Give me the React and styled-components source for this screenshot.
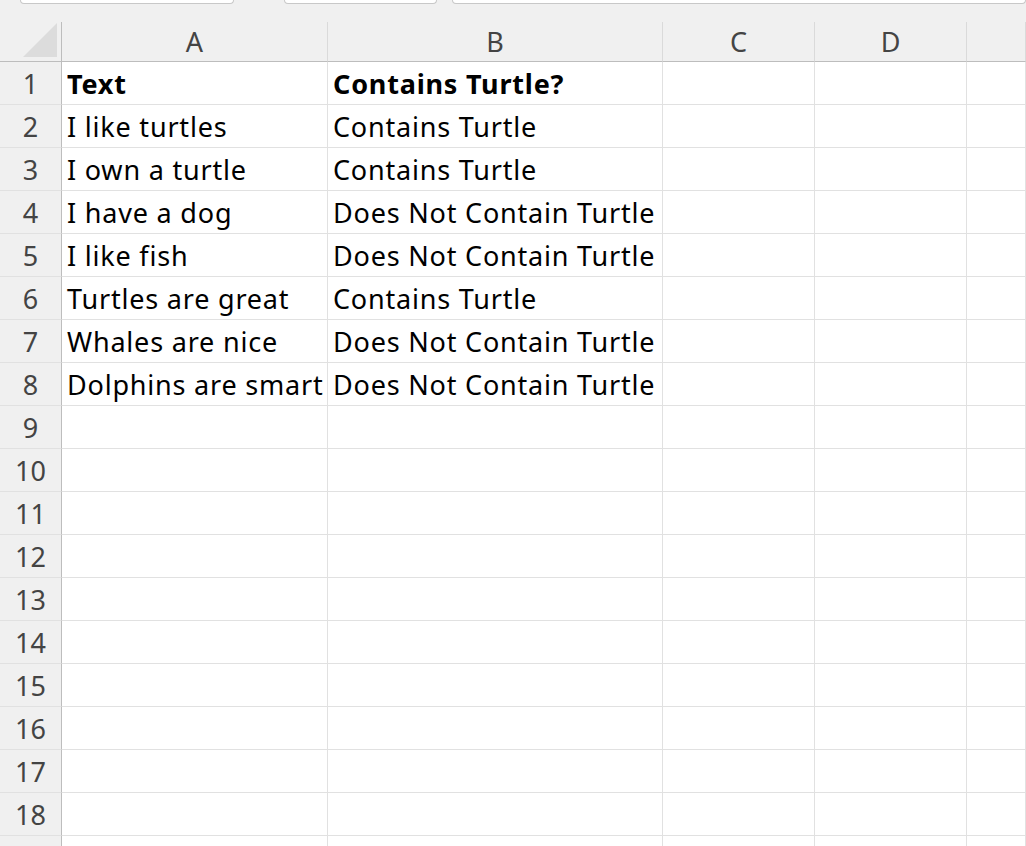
import styled, { createGlobalStyle } from 'styled-components'

const Global = createGlobalStyle`
  body { margin: 0; background: #f0f0f0; font-family: "Noto Sans", "Open Sans", sans-serif; overflow: hidden; }
`

const TabStrip = styled.div`
  height: 22px;
  display: flex;
  align-items: flex-start;
`

const Tab = styled.div`
  width: ${p => p.w}px;
  margin-left: ${p => p.ml}px;
  height: 3px;
  background: #fff;
  border: 1px solid #c8c8c8;
  border-top: none;
  border-radius: 0 0 6px 6px;
`

const Grid = styled.div`
  display: grid;
  grid-template-columns: 62px 266px 335px 152px 152px 1fr;
  grid-template-rows: 40px;
  grid-auto-rows: 43px;
`

const Corner = styled.div`
  background: #f0f0f0;
  border-right: 1px solid #bdbdbd;
  border-bottom: 1px solid #bdbdbd;
  position: relative;
  &::after {
    content: '';
    position: absolute;
    right: 4px;
    bottom: 4px;
    width: 0;
    height: 0;
    border-left: 34px solid transparent;
    border-bottom: 34px solid #dcdcdc;
  }
`

const ColHead = styled.div`
  background: #f0f0f0;
  border-bottom: 1px solid #bdbdbd;
  border-right: 1px solid #dadada;
  display: flex;
  align-items: center;
  justify-content: center;
  font-size: 27px;
  color: #444;
`

const RowHead = styled.div`
  background: #f0f0f0;
  border-right: 1px solid #bdbdbd;
  border-bottom: 1px solid #e1e1e1;
  display: flex;
  align-items: center;
  justify-content: center;
  font-size: 27px;
  color: #444;
`

const Cell = styled.div`
  background: #fff;
  border-right: 1px solid #e1e1e1;
  border-bottom: 1px solid #e1e1e1;
  display: flex;
  align-items: center;
  padding-left: 5px;
  font-size: 27px;
  letter-spacing: 0.8px;
  color: #000;
  white-space: nowrap;
  overflow: hidden;
  font-weight: ${p => (p.bold ? 700 : 400)};
`

const data = [
  ['Text', 'Contains Turtle?'],
  ['I like turtles', 'Contains Turtle'],
  ['I own a turtle', 'Contains Turtle'],
  ['I have a dog', 'Does Not Contain Turtle'],
  ['I like fish', 'Does Not Contain Turtle'],
  ['Turtles are great', 'Contains Turtle'],
  ['Whales are nice', 'Does Not Contain Turtle'],
  ['Dolphins are smart', 'Does Not Contain Turtle'],
]

export default function App() {
  const rows = Array.from({ length: 19 }, (_, i) => data[i] || ['', ''])
  return (
    <>
      <Global />
      <TabStrip>
        <Tab w={222} ml={20} />
        <Tab w={158} ml={50} />
        <Tab w={600} ml={15} />
      </TabStrip>
      <Grid>
        <Corner />
        {['A', 'B', 'C', 'D', ''].map((c, i) => (
          <ColHead key={i}>{c}</ColHead>
        ))}
        {rows.map((r, i) => [
          <RowHead key={'h' + i}>{i < 18 ? i + 1 : ''}</RowHead>,
          <Cell key={'a' + i} bold={i === 0}>{r[0]}</Cell>,
          <Cell key={'b' + i} bold={i === 0}>{r[1]}</Cell>,
          <Cell key={'c' + i} />,
          <Cell key={'d' + i} />,
          <Cell key={'e' + i} />,
        ])}
      </Grid>
    </>
  )
}
